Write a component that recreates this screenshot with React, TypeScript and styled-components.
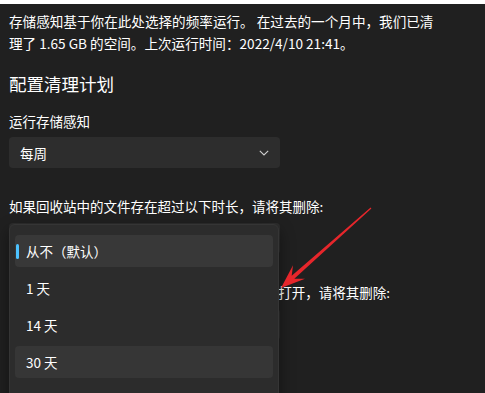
import React from 'react';
import styled, { createGlobalStyle } from 'styled-components';

const GlobalStyle = createGlobalStyle`
  html, body {
    margin: 0;
    padding: 0;
    background: #202020;
  }
  body {
    font-family: "Noto Sans CJK SC", "Noto Sans", sans-serif;
    color: #ffffff;
    overflow: hidden;
  }
`;

const options = ['从不（默认）', '1 天', '14 天', '30 天', '60 天', '90 天'];

function Chevron() {
  return (
    <svg width='10' height='6' viewBox='0 0 10 6'>
      <path d='M0.8 0.8 L5 4.9 L9.2 0.8' fill='none' stroke='#cfcfcf' strokeWidth='1.1' />
    </svg>
  );
}

function Arrow() {
  return (
    <ArrowLayer width='485' height='393' viewBox='0 0 485 393'>
      <polygon
        points='371.4,208.5 294.3,278.8 305,278.75 281,288 293,265.25 291.7,275.8 370.6,207.5'
        fill='#e6262b'
      />
    </ArrowLayer>
  );
}

export default function App() {
  return (
    <Page>
      <GlobalStyle />
      <TopStrip />
      <Content>
        <Intro>
          存储感知基于你在此处选择的频率运行。 在过去的一个月中，我们已清理了 1.65 GB 的空间。上次运行时间：2022/4/10 21:41。
        </Intro>
        <Heading>配置清理计划</Heading>
        <Label>运行存储感知</Label>
        <Combo>
          <span>每周</span>
          <Chevron />
        </Combo>
        <Label $gap={28}>如果回收站中的文件存在超过以下时长，请将其删除:</Label>
        <ComboWrap>
          <Combo $gap={7}>
            <span>从不（默认）</span>
            <Chevron />
          </Combo>
          <Flyout>
            {options.map((o, i) => (
              <Item key={o} $selected={i === 0} $hover={i === 3}>
                {i === 0 && <Indicator />}
                {o}
              </Item>
            ))}
          </Flyout>
        </ComboWrap>
        <Label $gap={28}>如果"下载"文件夹中的文件在超过以下时长未打开，请将其删除:</Label>
        <Combo $gap={7}>
          <span>从不（默认）</span>
          <Chevron />
        </Combo>
      </Content>
      <Arrow />
    </Page>
  );
}

const Page = styled.div`
  position: relative;
  width: 485px;
  height: 393px;
  overflow: hidden;
  background: #202020;
`;

const TopStrip = styled.div`
  height: 4px;
  background: #ffffff;
`;

const Content = styled.div`
  padding: 0 36px 0 9px;
`;

const Intro = styled.p`
  margin: 6px 0 0;
  max-width: 436px;
  font-size: 13.6px;
  line-height: 22px;
  color: #ffffff;
`;

const Heading = styled.h2`
  margin: 18px 0 0;
  font-size: 17.5px;
  line-height: 24px;
  font-weight: 400;
  color: #ffffff;
`;

const Label = styled.div<{ $gap?: number }>`
  margin-top: ${p => p.$gap ?? 15}px;
  font-size: 13.5px;
  line-height: 20px;
  color: #ffffff;
  white-space: nowrap;
`;

const ComboWrap = styled.div`
  position: relative;
`;

const Combo = styled.div<{ $gap?: number }>`
  margin-top: ${p => p.$gap ?? 6}px;
  width: 271px;
  height: 31px;
  box-sizing: border-box;
  display: flex;
  align-items: center;
  justify-content: space-between;
  padding: 0 11px;
  background: #2d2d2d;
  border-radius: 4px;
  font-size: 13.5px;
  color: #ffffff;
`;

const Flyout = styled.div`
  position: absolute;
  z-index: 2;
  top: 1px;
  left: 0;
  width: 270px;
  height: 230px;
  box-sizing: border-box;
  padding: 10px 5px 0;
  display: flex;
  flex-direction: column;
  gap: 5px;
  background: #2c2c2c;
  border: 1px solid #353535;
  border-radius: 6px;
  box-shadow: 0 6px 16px rgba(0, 0, 0, 0.45);
`;

const Item = styled.div<{ $selected?: boolean; $hover?: boolean }>`
  position: relative;
  flex: 0 0 32px;
  display: flex;
  align-items: center;
  padding-left: 11px;
  border-radius: 4px;
  font-size: 13.5px;
  color: #ffffff;
  background: ${p => (p.$selected ? '#383838' : p.$hover ? '#363636' : 'transparent')};
`;

const Indicator = styled.span`
  position: absolute;
  left: 1px;
  top: 9px;
  width: 3px;
  height: 15px;
  border-radius: 2px;
  background: #4cc2ff;
`;

const ArrowLayer = styled.svg`
  position: absolute;
  z-index: 3;
  left: 0;
  top: 0;
  pointer-events: none;
`;
